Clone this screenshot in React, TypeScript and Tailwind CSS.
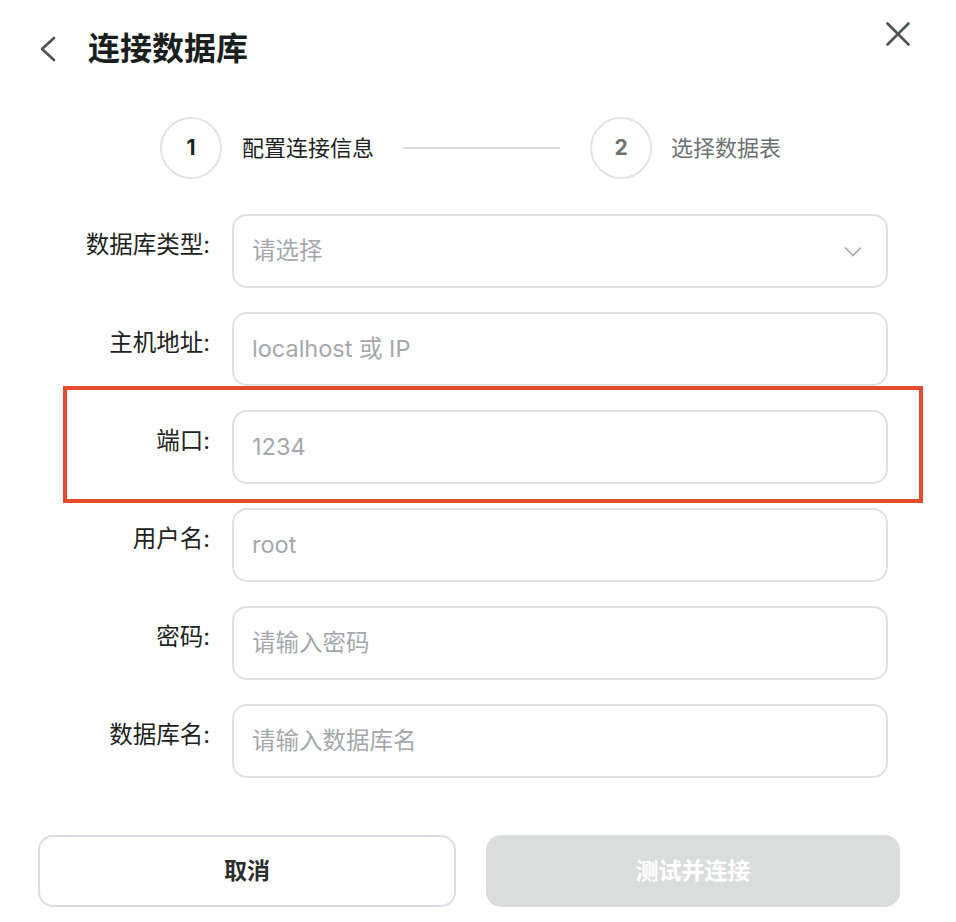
const fields = [
  { label: "数据库类型:", placeholder: "请选择", select: true },
  { label: "主机地址:", placeholder: "localhost 或 IP" },
  { label: "端口:", placeholder: "1234", marked: true },
  { label: "用户名:", placeholder: "root" },
  { label: "密码:", placeholder: "请输入密码" },
  { label: "数据库名:", placeholder: "请输入数据库名" },
];

const FieldRow = ({ label, placeholder, select, marked }: { label: string; placeholder: string; select?: boolean; marked?: boolean }) => (
  <div className="relative flex items-start gap-[22px]">
    <label className="w-[146px] shrink-0 pt-[16px] text-right text-[23.5px] leading-[30px] text-[#1d2320]">{label}</label>
    <div className="flex h-[74px] flex-1 items-center justify-between rounded-[15px] border-2 border-[#dfe2e2] bg-white pl-[18px] pr-[24px]">
      <span className="text-[23.5px] text-[#a4a8ac]">{placeholder}</span>
      {select && (
        <svg width="18" height="11" viewBox="0 0 18 11" fill="none" stroke="#a4a8ac" strokeWidth="1.6">
          <path d="M1 1.5 L9 9.5 L17 1.5" />
        </svg>
      )}
    </div>
    {marked && <div className="pointer-events-none absolute -left-[1px] -top-[24px] -right-[35px] -bottom-[19px] border-4 border-[#e64a2e]" />}
  </div>
);

export default function App() {
  return (
    <div className="min-h-[922px] w-[956px] bg-white font-['Inter','Noto_Sans_CJK_SC',sans-serif]">
      <header className="flex items-start justify-between pl-[40px] pr-[46px] pt-[22px]">
        <div className="mt-[11px] flex items-center gap-[32px]">
          <svg width="16" height="26" viewBox="0 0 16 26" fill="none" stroke="#4a5450" strokeWidth="2.6" strokeLinecap="round" strokeLinejoin="round">
            <path d="M14 2 L2 13 L14 24" />
          </svg>
          <h1 className="text-[32px] font-bold leading-[32px] text-[#1a1f1d]">连接数据库</h1>
        </div>
        <svg width="24" height="24" viewBox="0 0 24 24" fill="none" stroke="#4a5450" strokeWidth="2.6" strokeLinecap="round">
          <path d="M1.5 1.5 L22.5 22.5 M22.5 1.5 L1.5 22.5" />
        </svg>
      </header>

      <div className="mt-[52px] flex items-center pl-[160px]">
        <div className="flex h-[62px] w-[62px] items-center justify-center rounded-full border-2 border-[#e0e4e3] text-[21px] font-bold text-[#1d2320]">1</div>
        <span className="ml-[20px] text-[22px] text-[#1d2320]">配置连接信息</span>
        <div className="ml-[29px] h-[1.5px] w-[157px] bg-[#d9dddc]" />
        <div className="ml-[30px] flex h-[62px] w-[62px] items-center justify-center rounded-full border-2 border-[#e0e4e3] text-[21px] font-bold text-[#6c7370]">2</div>
        <span className="ml-[19px] text-[22px] text-[#6c7370]">选择数据表</span>
      </div>

      <form className="ml-[64px] mt-[35px] flex w-[824px] flex-col gap-[24px]">
        {fields.map((f) => (
          <FieldRow key={f.label} {...f} />
        ))}
      </form>

      <div className="ml-[38px] mt-[57px] flex w-[862px] gap-[30px]">
        <button className="flex h-[72px] flex-1 items-center justify-center rounded-[15px] border-2 border-[#dcdce4] bg-white text-[23px] font-bold text-[#2a2f2d]">取消</button>
        <button className="flex h-[72px] flex-1 items-center justify-center rounded-[15px] bg-[#d9dddc] text-[23px] font-bold text-white">测试并连接</button>
      </div>
    </div>
  );
}
